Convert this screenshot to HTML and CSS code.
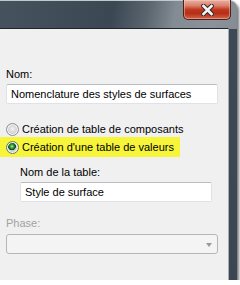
FILE: index.html
```html
<!DOCTYPE html>
<html lang="fr">
<head>
  <meta charset="UTF-8">
  <title>Table de valeurs</title>
  <link rel="stylesheet" href="styles.css">
</head>
<body>
  <div class="window">
    <div class="titlebar">
      <button class="close" title="Fermer">
        <svg width="13" height="12" viewBox="0 0 13 12">
          <path d="M2.5 2 L10.5 10 M10.5 2 L2.5 10" stroke="#3b2a2a" stroke-width="4.6" stroke-linecap="square" fill="none"/>
          <path d="M2.5 2 L10.5 10 M10.5 2 L2.5 10" stroke="#f4f4f4" stroke-width="2.6" stroke-linecap="square" fill="none"/>
        </svg>
      </button>
    </div>
    <div class="client">
      <div class="label">Nom:</div>
      <div class="textbox">Nomenclature des styles de surfaces</div>

      <div class="option first">
        <span class="radio"></span>
        <span>Création de table de composants</span>
      </div>
      <div class="option marked">
        <span class="radio checked"></span>
        <span>Création d'une table de valeurs</span>
      </div>

      <div class="indent">
        <div class="label">Nom de la table:</div>
        <div class="textbox">Style de surface</div>
      </div>

      <div class="label phase">Phase:</div>
      <div class="combo">
        <span class="arrow"></span>
      </div>
    </div>
  </div>
</body>
</html>
```

FILE: styles.css
```css
body {
  margin: 0;
  background: #fff;
  font-family: "Liberation Sans", Arial, sans-serif;
  font-size: 11px;
  color: #000;
}

.window {
  width: 237px;
  height: 280px;
  display: flex;
  flex-direction: column;
  border-top-right-radius: 7px;
  background:
    linear-gradient(to bottom, transparent 28px, #3d4954 28px, #3a4651 100%),
    linear-gradient(100deg, #46535f 0%, #3b4853 40%, #59646e 52%, #838b93 62%, #8b9299 75%, #7b838b 100%);
  box-shadow: 2px 3px 3px rgba(0, 0, 0, 0.55);
  border-top: 1px solid #c3c8cc;
  box-sizing: border-box;
}

.titlebar {
  height: 27px;
  display: flex;
  justify-content: flex-end;
  padding-right: 6px;
}

.close {
  width: 48px;
  height: 20px;
  margin-top: -1px;
  padding: 0;
  border: 1px solid #4a2018;
  border-top: none;
  border-radius: 0 0 5px 5px;
  background: linear-gradient(#e9b2a3 0%, #d9806b 30%, #c2391f 50%, #b52d16 70%, #d2644a 100%);
  box-shadow: inset 0 0 0 1px rgba(255, 210, 200, 0.45);
  display: flex;
  align-items: center;
  justify-content: center;
}

.close svg {
  display: block;
}

.client {
  flex: 1;
  margin-right: 8px;
  background: #f0f0f0;
  border-top: 1px solid #1c242c;
  border-right: 1px solid #a9aeb3;
  padding: 39px 10px 0 6px;
}

.label {
  line-height: 13px;
}

.textbox {
  margin-top: 3px;
  height: 20px;
  box-sizing: border-box;
  padding: 0 4px;
  line-height: 18px;
  background: #fff;
  border: 1px solid #dfe3e8;
  border-top-color: #b9bcc1;
  border-radius: 2px;
}

.option {
  display: flex;
  align-items: center;
  gap: 3px;
  height: 18px;
}

.option.first {
  margin-top: 16px;
}

.option.marked {
  height: 20px;
  margin: -1px 0 0 -6px;
  padding: 0 6px;
  width: fit-content;
  background: #f6f53a;
}

.radio {
  width: 13px;
  height: 13px;
  box-sizing: border-box;
  border-radius: 50%;
  border: 1px solid #8d8f92;
  background: radial-gradient(circle at 50% 45%, #f4f4f4 0, #dcdcdc 3px, #c9cacc 6px);
  box-shadow: inset 0 0 0 1px #f7f7f7;
}

.radio.checked {
  border-color: #6b7a6b;
  background:
    radial-gradient(circle at 45% 40%, #c8f0b8 0, #42a843 1.5px, #176b1f 3px, #0d3f14 3.6px, transparent 4.2px),
    radial-gradient(circle at 50% 45%, #f4f4f4 0, #dadada 3px, #c6c7c9 6px);
}

.indent {
  margin: 9px 6px 0 14px;
}

.phase {
  margin-top: 15px;
  color: #a2a2a2;
}

.combo {
  margin-top: 4px;
  height: 20px;
  box-sizing: border-box;
  border: 1px solid #b3b7ba;
  border-radius: 3px;
  background: #f4f4f4;
  display: flex;
  align-items: center;
  justify-content: flex-end;
  padding-right: 5px;
}

.arrow {
  width: 0;
  height: 0;
  border-left: 3.5px solid transparent;
  border-right: 3.5px solid transparent;
  border-top: 4px solid #9a9a9a;
  margin-top: 1px;
}
```
